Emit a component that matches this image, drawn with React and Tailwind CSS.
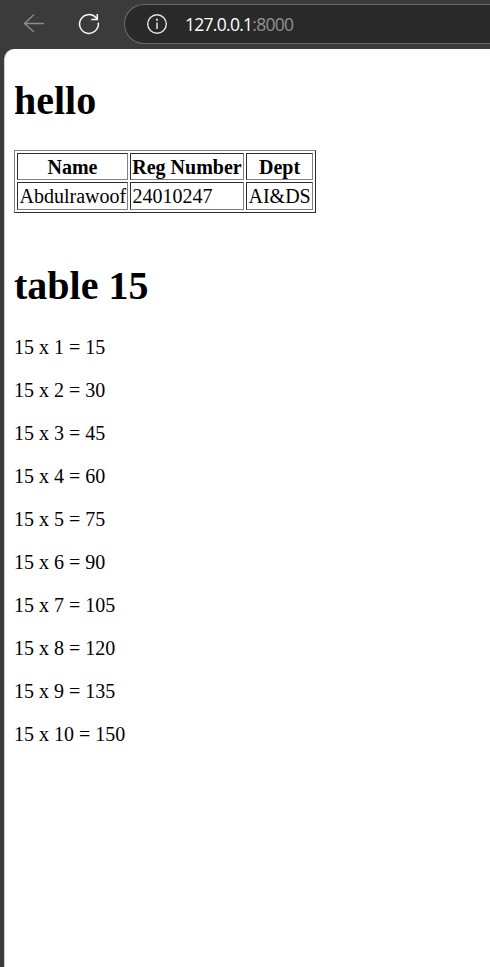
const header = 'flex items-center justify-center border border-t-[#2c2c2c] border-l-[#2c2c2c] border-r-[#808080] border-b-[#808080] pt-px font-bold whitespace-nowrap';
const cell = 'flex items-center border border-t-[#2c2c2c] border-l-[#2c2c2c] border-r-[#808080] border-b-[#808080] pl-[1.5px] whitespace-nowrap';

function Toolbar() {
  return (
    <header className="flex h-[49px] shrink-0 items-start pt-1 pl-[22px]">
      <svg className="mt-[7px] h-6 w-6 shrink-0" viewBox="0 0 24 24" fill="none" stroke="#8c8c8c" strokeWidth="1.4">
        <path d="M22 12.5H2.5M12 3.5L2.5 12.5L12 21" />
      </svg>
      <svg className="mt-2 ml-[31px] h-6 w-6 shrink-0" viewBox="0 0 24 24" fill="none" stroke="#f8f8f8" strokeWidth="1.5">
        <path d="M21.3 10.7A9.4 9.4 0 1 1 18.9 5.6L20.3 7.5M20.3 2V7.5H14.3" />
      </svg>
      <div className="ml-[23px] flex h-10 flex-1 items-center rounded-l-full border border-r-0 border-[#6c6c6c] bg-[#292929] pl-[21px]">
        <svg className="h-[22px] w-[22px] shrink-0" viewBox="0 0 22 22" fill="none" stroke="#e5e5e5" strokeWidth="1.4">
          <circle cx="11" cy="11" r="9.3" />
          <path d="M11 9.5V16" stroke="#c4c4c4" strokeWidth="1.8" />
          <circle cx="11" cy="6.8" r="1.2" fill="#c4c4c4" stroke="none" />
        </svg>
        <span className="ml-[17px] font-['Open_Sans',sans-serif] text-[17.5px] leading-6 tracking-[-0.72px] whitespace-nowrap text-white">
          127.0.0.1<span className="text-[#929292]">:8000</span>
        </span>
      </div>
    </header>
  );
}

export default function App() {
  return (
    <div className="flex h-[967px] w-[490px] flex-col overflow-hidden bg-[#3b3b3b]">
      <Toolbar />
      <main className="ml-1 flex-1 rounded-tl-[10px] border-l border-[#cfcfcf] bg-white pl-[9px] font-['Liberation_Serif',serif] text-[20px] leading-[23px] text-black">
        <h1 className="pt-[29px] text-[40px] leading-[46px] font-bold">hello</h1>
        <div className="mt-[26px] grid h-[63px] w-[302px] grid-cols-[111px_114px_67px] grid-rows-[27px_28px] gap-[2px] border border-t-[#808080] border-l-[#808080] border-r-[#2c2c2c] border-b-[#2c2c2c] p-[2px]">
          <div className={header}>Name</div>
          <div className={header}>Reg Number</div>
          <div className={header}>Dept</div>
          <div className={cell}>Abdulrawoof</div>
          <div className={cell}>24010247</div>
          <div className={cell}>AI&amp;DS</div>
        </div>
        <h1 className="mt-[50px] text-[40px] leading-[46px] font-bold">table 15</h1>
        <div className="mt-[27px] flex flex-col gap-5">
          {[1, 2, 3, 4, 5, 6, 7, 8, 9, 10].map((n) => (
            <p key={n}>15 x {n} = {15 * n}</p>
          ))}
        </div>
      </main>
    </div>
  );
}
